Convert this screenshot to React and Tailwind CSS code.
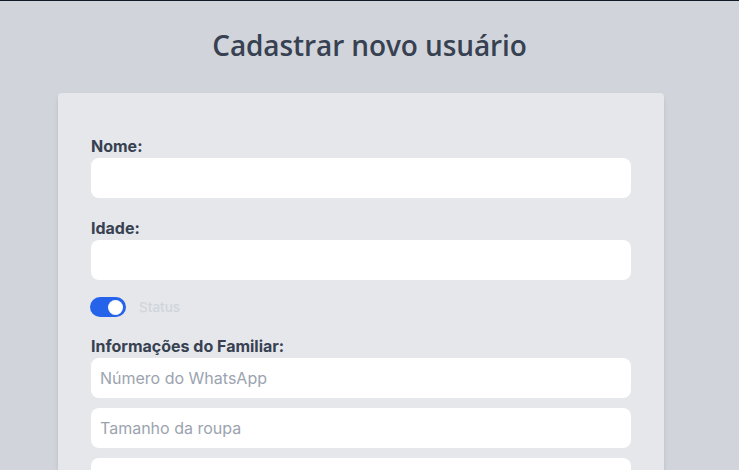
import React from "react";

function Field({ label, className = "" }) {
  return (
    <div className={className}>
      <label className="block text-[16px] leading-[20px] font-bold text-[#374151] mb-[2px]">{label}</label>
      <input type="text" className="block w-full h-[40px] rounded-lg bg-white px-[9px] text-[16px] outline-none" />
    </div>
  );
}

function PInput({ placeholder }) {
  return (
    <input
      type="text"
      placeholder={placeholder}
      className="block w-full h-[40px] rounded-lg bg-white px-[9px] text-[16px] text-[#374151] placeholder:text-[#9ca3af] outline-none"
    />
  );
}

export default function App() {
  return (
    <div className="min-h-[470px] bg-[#d1d5db] border-t border-[#111827]" style={{ fontFamily: "Inter, sans-serif" }}>
      <h1
        className="text-center text-[28px] leading-[36px] font-semibold tracking-[-0.1px] text-[#374151] pt-[26px]"
        style={{ fontFamily: "'Open Sans', sans-serif" }}
      >
        Cadastrar novo usuário
      </h1>
      <div className="mx-[58px] w-[606px] mt-[30px] bg-[#e5e7eb] rounded-[4px] shadow-md px-[33px] pt-[43px] pb-8">
        <Field label="Nome:" />
        <Field label="Idade:" className="mt-[20px]" />
        <div className="mt-[17px] flex items-center gap-[13px] -ml-px">
          <div className="w-[36px] h-[20px] rounded-full bg-[#2563eb] flex items-center justify-end pr-[3px]">
            <div className="w-[15px] h-[15px] rounded-full bg-white" />
          </div>
          <span className="text-[13.5px] font-medium text-[#d1d5db]">Status</span>
        </div>
        <label className="block mt-[19px] text-[16px] leading-[20px] font-bold text-[#374151] mb-[2px]">
          Informações do Familiar:
        </label>
        <div className="flex flex-col gap-[10px]">
          <PInput placeholder="Número do WhatsApp" />
          <PInput placeholder="Tamanho da roupa" />
          <PInput placeholder="Tamanho do calçado" />
        </div>
      </div>
    </div>
  );
}
